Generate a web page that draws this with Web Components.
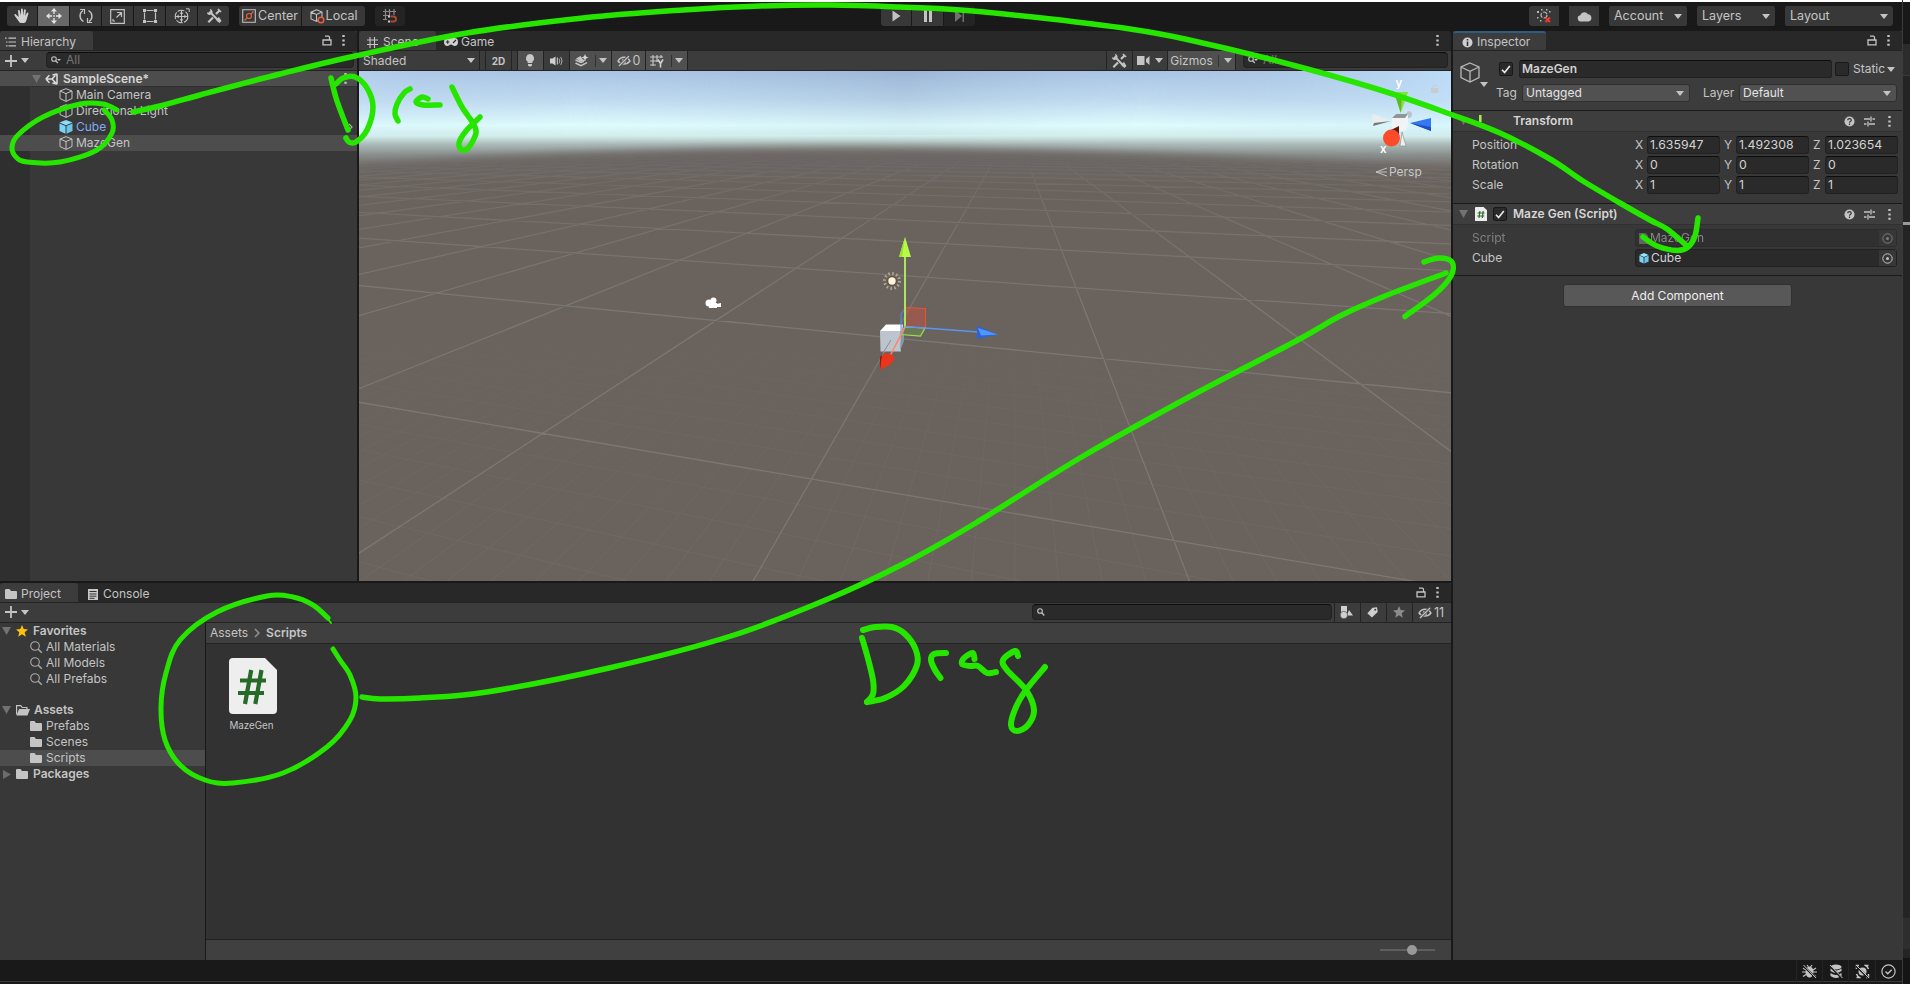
<!DOCTYPE html>
<html lang="en"><head><meta charset="utf-8"><title>Editor</title>
<style>
html,body{margin:0;height:100%;background:#191919;overflow:hidden}
body{font:12px/16px Inter,"Noto Sans",sans-serif;color:#c4c4c4}
</style></head><body>
<editor-app></editor-app>
<script>
const define=(name,css,html,setup)=>{
  const t=document.createElement('template');
  t.innerHTML=`<style>*{box-sizing:border-box}:host{box-sizing:border-box}${css}</style>${html}`;
  customElements.define(name,class extends HTMLElement{
    constructor(){super();this.attachShadow({mode:'open'}).append(t.content.cloneNode(true))}
    connectedCallback(){if(setup&&!this.ready){this.ready=true;setup(this,this.shadowRoot)}}
  });
};

/* ---------- icons: [viewBox w, h, markup] drawn 1:1 in pixels ---------- */
const hashDoc='<path d="M1 0h9l4 4v12a1 1 0 0 1-1 1H1a1 1 0 0 1-1-1V1a1 1 0 0 1 1-1z" transform="scale(.86 .84)" fill="#eee"/><path d="M4.9 4 4 11M8.2 4l-.9 7M2.6 6h7M2.3 9h7" stroke="#2a6b2c" stroke-width="1.2"/>';
const eye='<path d="M1 7c3-5 9-5 12 0-3 4-9 4-12 0z" stroke="currentColor" stroke-width="1.4" fill="none"/><circle cx="7" cy="7" r="2.3" fill="currentColor"/><path d="M2 12 13 1" stroke="#4a4a4a" stroke-width="3"/><path d="M2 12 12 2" stroke="currentColor" stroke-width="1.3"/>';
const icons={
 hand:[16,16,'<path d="M4.6 9 2 6.5c-1-1-2.200.2-1.300 1.200L4.500 13c.8 1.500 1.500 2 3 2h2c1.800 0 2.500-1 3-3l1.900-6.300c.3-1.200-1.200-1.700-1.700-.5L11.300 8l.5-5.600c.1-1.300-1.600-1.400-1.800-.1L9.300 7.400 8.800 1.500c-.1-1.300-1.800-1.300-1.800 0l0 5.900L5.700 2.600c-.4-1.200-2-.8-1.700.4z" fill="#d2d2d2"/>'],
 move:[16,16,'<path d="M8 0l3 3.500H5zM8 16l3-3.500H5zM0 8l3.500-3v6zM16 8l-3.500-3v6z" fill="#e2e2e2"/><path d="M8 3v3M8 10v3M3 8h3M10 8h3" stroke="#e2e2e2" stroke-width="1.300"/><path d="M7 7h2v2H7z" fill="#b0b0b0"/>'],
 rotate:[16,16,'<path d="M5 2.500C1 5 1 11 5.500 13.500M11 13.500c4-2.500 4-8.500-.5-11" fill="none" stroke="#c4c4c4" stroke-width="1.400"/><path d="M2 1.500h4.500V6M14 14.500H9.500V10" fill="none" stroke="#c4c4c4" stroke-width="1.200"/>'],
 scale:[15,15,'<path d="M.7.7h13.600v13.600H.7z" fill="none" stroke="#c4c4c4" stroke-width="1.200"/><path d="M3 10v2h2M6.500 8.500 11 4M7 3.500h4.500V8" fill="none" stroke="#c4c4c4" stroke-width="1.200"/>'],
 rect:[16,16,'<path d="M4.500 2.500h7M4.500 13.500h7M2.500 4.500v7M13.500 4.500v7" stroke="#c4c4c4" stroke-width="1.200"/><path d="M1 1h3v3H1zM12 1h3v3h-3zM1 12h3v3H1zM12 12h3v3h-3z" fill="#c4c4c4"/>'],
 globe:[16,16,'<circle cx="7.500" cy="8.500" r="6.300" fill="none" stroke="#c4c4c4" stroke-width="1.100" stroke-dasharray="7 1.300"/><path d="M7.500 2.500v12M1.500 8.500h12" stroke="#c4c4c4" stroke-width="1.100"/><path d="M7.500 3.500l2 2.200h-4zM7.500 13.500l2-2.200h-4zM2.500 8.500l2.200-2v4zM12.500 8.500l-2.200-2v4z" fill="#c4c4c4"/><path d="M12 .8h3.200V4" fill="none" stroke="#c4c4c4"/>'],
 tools:[16,16,'<path d="M3.500 3.500 12.800 13" stroke="#c4c4c4" stroke-width="2"/><path d="M1 4.500c0 2 2 3 4 2l1.500-1.500C7 3 5.500 1 4 1L4.500 3.500 3.500 4.500zM11 10.500l2-1.500 2.500 4-2 2-3-2.500z" fill="#c4c4c4"/><path d="M13.500 2.500 10 6M7 9.500 2.300 14.200" stroke="#c4c4c4" stroke-width="2.200"/><path d="m12 1 3 3" stroke="#c4c4c4" stroke-width="1.600"/>'],
 pivot:[14,14,'<path d="M.7.7h12.600v12.600H.7z" fill="none" stroke="#c4c4c4" stroke-width="1.100"/><circle cx="7" cy="7" r="2.500" fill="none" stroke="#e8603c" stroke-width="1.200"/><path d="M9 5l2.500-2.500M5 9l-2.500 2.500" stroke="#e8603c" stroke-width="1.100"/>'],
 local:[16,15,'<path d="M6.500.8 12 3v6l-5.500 3.500L1 10V3.200zM1 3.200l5.500 2.300L12 3M6.500 5.500v7" fill="none" stroke="#c4c4c4" stroke-width="1.100"/><circle cx="11" cy="11" r="2.800" fill="#383838" stroke="#e8603c" stroke-width="1.500"/>'],
 snap:[16,16,'<path d="M3.500 1v11M7.500 1v6M12 1v6M1 3.500h13M1 7.500h7M1 11.500h4" stroke="#898989" stroke-width="1.200"/><path d="M8.500 8.500h3a2.400 2.400 0 0 1 0 5h-3" fill="none" stroke="#a44c30" stroke-width="2"/><path d="M6 7.500h2v2H6zM6 12.500h2v2H6z" fill="#ccc"/>'],
 play:[9,12,'<path d="M.5.5 8.500 6 .5 11.500z" fill="#c4c4c4"/>'],
 pause:[9,12,'<path d="M0 0h3v12H0zM5 0h3v12H5z" fill="#c4c4c4"/>'],
 step:[11,12,'<path d="M1 0l7 6-7 6zM8.500 0h1.500v12H8.500z" fill="#707070"/>'],
 nodes:[16,16,'<circle cx="8" cy="7" r="3" fill="none" stroke="#b8b8b8" stroke-width="1.200" stroke-dasharray="5 1.300"/><path d="M1 3h2v2H1zM5 1h1.500v1.500H5zM10 1h1.500v1.500H10zM13 3h1.500v1.500H13zM1 9h1.500v1.500H1zM4 12h1.500v1.500H4z" fill="#b8b8b8"/><path d="m9.500 9.500 4.500 4.500M14 9.500 9.500 14" stroke="#f0392c" stroke-width="2"/>'],
 cloud:[15,11,'<path d="M3.500 10.500a3.200 3.200 0 0 1-.3-6.300A4.400 4.400 0 0 1 11 3.200a3.700 3.700 0 0 1 .5 7.300z" fill="#c4c4c4"/>'],
 caret:[8,5,'<path d="M0 0h8L4 5z" fill="currentColor"/>'],
 lock:[10,11,'<path d="M1 5h8v4.800H1z" fill="none" stroke="#c4c4c4" stroke-width="1.300"/><path d="M3 1.200h3.200Q7.500 1.200 7.500 2.500V5" fill="none" stroke="#c4c4c4" stroke-width="1.300"/>'],
 dots:[3,11,'<path d="M.3 0h2.400v2H.3zM.3 4.400h2.400v2H.3zM.3 8.800h2.400v2H.3z" fill="#c4c4c4"/>'],
 list:[12,10,'<path d="M3.500 1.200H11M3.500 5H11M3.500 8.800H11" stroke="#c4c4c4" stroke-width="1.200"/><path d="M0 .6h1.500v1.200H0zM1 4.400h1.500v1.200H1zM1 8.200h1.500v1.200H1z" fill="#c4c4c4"/>'],
 plus:[12,12,'<path d="M6 0v12M0 6h12" stroke="#c4c4c4" stroke-width="1.800"/>'],
 search:[9,8,'<circle cx="3" cy="3" r="2.300" fill="none" stroke="#c4c4c4" stroke-width="1.100"/><path d="m4.800 4.800 2.500 2.700" stroke="#c4c4c4" stroke-width="1.300"/>'],
 searchCaret:[10,8,'<circle cx="3" cy="3" r="2.300" fill="none" stroke="#c4c4c4" stroke-width="1.100"/><path d="m4.800 4.800 2 2.200" stroke="#c4c4c4" stroke-width="1.200"/><path d="M6 3h4L8 5z" fill="#c4c4c4"/>'],
 find:[13,13,'<circle cx="5" cy="5" r="4.300" fill="none" stroke="#aaa" stroke-width="1.100"/><path d="m8.300 8.300 3.500 3.500" stroke="#aaa" stroke-width="1.500"/>'],
 unity:[13,12,'<path d="M12 .8v10.400M12 1 7.500 2M12 11 7.500 10M.8 6l3.600-3.700M.8 6l3.600 3.700M1 6h6M7 6l3.800-4M7 6l3.800 4" fill="none" stroke="#ddd" stroke-width="1.500"/>'],
 cube:[14,14,'<path d="M7 .7 13 3v7.500L7 13.400 1 10.500V3zM1 3l6 2.600L13 3M7 5.600v7.800" fill="none" stroke="#c4c4c4" stroke-width="1"/>'],
 cubeBig:[20,21,'<path d="M10 1 19 5v10.500l-9 4.500-9-4.500V5zM1 5l9 4.300L19 5M10 9.300V20" fill="none" stroke="#b8b8b8" stroke-width="1.300"/>'],
 prefab:[14,14,'<path d="M7 0l6.500 2.600L7 5.300.5 2.600z" fill="#8cddfb"/><path d="M.5 3.500 6.500 6v7.800L.5 11z" fill="#7bd3f7"/><path d="M13.500 3.500 7.500 6v7.800L13.500 11z" fill="#6cc4ea"/>'],
 prefabS:[10,11,'<path d="M5 0l4.600 1.900L5 3.900.4 1.900z" fill="#9be2fb"/><path d="M.4 2.600 4.600 4.500v6L.4 8.500z" fill="#7bd3f7"/><path d="M9.600 2.600 5.400 4.500v6l4.200-2z" fill="#6cc4ea"/>'],
 hash:[11,11,'<path d="M3 0v11M7.500 0v11M0 3h11M0 7.500h11" stroke="#c4c4c4" stroke-width="1.100"/>'],
 pad:[14,8,'<path d="M3.500 0h7a3.500 4 0 0 1 0 8C9 8 8.500 6.500 7 6.500S5 8 3.500 8a3.500 4 0 0 1 0-8z" fill="#d0d0d0"/><path d="M2 4h3.400M3.700 2.300v3.400M9 5l3-3" stroke="#282828" stroke-width="1.100"/>'],
 bulb:[10,13,'<path d="M5 0a4.300 4.300 0 0 1 2.500 7.600L7.300 9H2.700l-.2-1.400A4.300 4.300 0 0 1 5 0zM3 10h4v1.500L5.800 12.500H4.200L3 11.500z" fill="#c8c8c8"/>'],
 audio:[13,10,'<path d="M0 2.500h2.500L5.500.5v9l-3-2H0zM6.800 1.500h1v7h-1z" fill="#d0d0d0"/><path d="M9 2.500q1.500 2.500 0 5M10.800 1q2.400 4 0 8" fill="none" stroke="#aaa"/>'],
 fx:[14,13,'<path d="M.5 6 6 8.500l3-1.200M.5 9 6 11.700l6-3" fill="none" stroke="#c4c4c4" stroke-width="1.400"/><path d="M1 4.500 5.500 2 8 5.500l3 .8L6 8z" fill="#c4c4c4"/><path d="M10 0l1 2.500L13.500 3.500 11 4.500 10 7 9 4.500 6.500 3.500 9 2.500z" fill="#d8d8d8"/>'],
 eye:[14,13,eye],
 gridy:[15,14,'<path d="M3 1v11M7 1v7M11 1v3M0 3h13M0 7h8M0 11h6" stroke="#c4c4c4" stroke-width="1.200"/><path d="M8 5.500l2.500 4 2.500-4M10.500 9v4.500" fill="none" stroke="#d8d8d8" stroke-width="1.500"/>'],
 cam:[13,9,'<path d="M0 0h7.500v9H0zM9 3l3.500-3v9L9 6z" fill="#c4c4c4"/>'],
 info:[11,11,'<circle cx="5.500" cy="5.500" r="5" fill="#d0d0d0"/><path d="M4.700 2h1.600v1.600H4.700zM4.700 4.500h1.600V9H4.700z" fill="#333"/>'],
 help:[11,11,'<circle cx="5.500" cy="5.500" r="5" fill="#c4c4c4"/><path d="M3.700 4.300q0-1.700 1.800-1.700t1.800 1.600c0 1-1.800 1-1.800 2.500M5.500 7.600v1.300" fill="none" stroke="#333" stroke-width="1.200"/>'],
 preset:[11,11,'<path d="M0 3h6M8.500 3H11M0 8h2.500M5 8h6M7 .5v5M4 5.500v5" stroke="#c4c4c4" stroke-width="1.300"/>'],
 check:[10,9,'<path d="M1 4.800 3.600 7.600 8.800 1" fill="none" stroke="#ececec" stroke-width="1.600"/>'],
 script:[12,14,hashDoc],
 scriptDim:[9,11,'<path d="M0 0h6.500L9 2.500V11H0z" fill="#8c8c8c"/>'],
 target:[11,11,'<circle cx="5.500" cy="5.500" r="4.700" fill="none" stroke="#c4c4c4"/><circle cx="5.500" cy="5.500" r="1.500" fill="#c4c4c4"/>'],
 folder:[12,10,'<path d="M0 1Q0 0 1 0h3.500L6 2h5q1 0 1 1v6q0 1-1 1H1Q0 10 0 9z" fill="#c4c4c4"/>'],
 folderOpen:[14,11,'<path d="M.6 9.500V.7h4.200L6.200 2.500h4.700v2" fill="none" stroke="#c4c4c4" stroke-width="1.200"/><path d="M3 4h11l-2.500 6.500H.5z" fill="#c4c4c4"/>'],
 star:[12,12,'<path d="M6 0l1.700 4.100 4.300.3-3.300 2.800 1.100 4.500L6 9.300l-3.800 2.400 1.100-4.500L0 4.400l4.300-.3z" fill="#fcc00f"/>'],
 starDim:[12,12,'<path d="M6 0l1.700 4.100 4.300.3-3.300 2.800 1.100 4.500L6 9.300l-3.800 2.400 1.100-4.500L0 4.400l4.300-.3z" fill="#8c8c8c"/>'],
 console:[10,11,'<path d="M0 0h10v11H0z" fill="#c8c8c8"/><path d="M1.500 2.500h7M1.500 5h7M1.500 7.200h7M1.500 9.300h5" stroke="#333"/>'],
 shapes:[13,13,'<path d="M1 0h6v6H1zM9 4l4 5.500H7z" fill="#d0d0d0"/><circle cx="3.900" cy="9" r="3.700" fill="#d0d0d0" stroke="#3c3c3c" stroke-width=".6"/>'],
 tag:[11,11,'<path d="M5.500.8 10 .3l.7 4.600L4.900 10.600.4 6.300z" fill="#d0d0d0"/><circle cx="8.200" cy="2.800" r="1" fill="#3c3c3c"/>'],
 crumb:[6,10,'<path d="m1 1 3.800 4L1 9" fill="none" stroke="#8c8c8c" stroke-width="1.700"/>'],
 bug:[15,15,'<ellipse cx="7.500" cy="8" rx="4" ry="5.500" fill="#c4c4c4"/><path d="M1 4l3 2M0 8h4M1 12.500l3-2M14 4l-3 2M15 8h-4M14 12.500l-3-2M5 1l1.500 2M10 1 8.500 3" stroke="#c4c4c4" stroke-width="1.200"/><path d="m1 1.500 13 12.500" stroke="#191919" stroke-width="2"/><path d="m1.500 1 12.500 13" stroke="#c4c4c4"/>'],
 stack:[14,15,'<ellipse cx="7" cy="3" rx="5.500" ry="2.500" fill="#c4c4c4"/><path d="M1.500 4.500q5.500 4 11 0v2.500q-5.500 4-11 0zM1.500 9q5.500 4 11 0v3q-5.500 4-11 0z" fill="#c4c4c4"/><path d="m1 2 12 12.500" stroke="#191919" stroke-width="2"/><path d="m1 1 12.500 13" stroke="#c4c4c4"/>'],
 refresh:[15,15,'<path d="M4 1.500H1.500V5M11 13.500h2.500V10M1.500 10q1 3 4 4M13.500 5q-1-3-4-4M10.500 1.500h3M1.500 13.500h3" fill="none" stroke="#c4c4c4" stroke-width="1.500"/><circle cx="7.500" cy="7.500" r="4" fill="#c4c4c4"/><path d="m1 2 13 12.500" stroke="#191919" stroke-width="2"/><path d="m1 1 13 13" stroke="#c4c4c4"/>'],
 ok:[15,15,'<circle cx="7.500" cy="7.500" r="6.600" fill="none" stroke="#c4c4c4" stroke-width="1.200"/><path d="m4.500 7.500 2.200 2.200 4-4" fill="none" stroke="#c4c4c4" stroke-width="1.400"/>'],
 fold:[9,8,'<path d="M0 0h9L4.500 8z" fill="#727272"/>'],
 foldR:[8,9,'<path d="M0 0v9l8-4.500z" fill="#6c6c6c"/>'],
 chevron:[5,8,'<path d="M1 1l3 3-3 3" fill="none" stroke="#aaa" stroke-width="1.200"/>'],
 axes:[13,13,'<path d="M5 0h2.600v7H5z" fill="#a4e84c"/><path d="M6.500 8.500l5 .5-1 3-3-1z" fill="#f0502c"/>']
};
define('ui-icon',':host{display:inline-flex;flex:none}svg{display:block}','',(el,r)=>{
  const [w,h,m]=icons[el.getAttribute('name')];
  r.append(document.createRange().createContextualFragment(`<svg width="${w}" height="${h}" viewBox="0 0 ${w} ${h}" fill="none">${m}</svg>`));
});

define('tool-btn',`:host{display:flex;align-items:center;justify-content:center;height:20px;background:#383838;flex:none;gap:2px;font-size:12.500px}
:host([on]){background:#696969}:host([dim]){background:#242424}:host([drop]){justify-content:space-between;padding:0 5px;border-radius:2px}`,'<slot></slot>');
define('main-toolbar',`:host{display:flex;height:31px;background:#191919;border-top:2px solid #fff;padding:4px 9px 0 7px;width:1902px;align-items:flex-start}
.g{display:flex;gap:1px;border-radius:3px;overflow:hidden;flex:none}.sp{flex:1}`,
`<div class="g"><tool-btn style="width:30px"><ui-icon name="hand"></ui-icon></tool-btn><tool-btn on style="width:31px"><ui-icon name="move"></ui-icon></tool-btn><tool-btn style="width:31px"><ui-icon name="rotate"></ui-icon></tool-btn><tool-btn style="width:31px"><ui-icon name="scale"></ui-icon></tool-btn><tool-btn style="width:31px"><ui-icon name="rect"></ui-icon></tool-btn><tool-btn style="width:31px"><ui-icon name="globe"></ui-icon></tool-btn><tool-btn style="width:31px"><ui-icon name="tools"></ui-icon></tool-btn></div>
<div class="g" style="margin-left:10px"><tool-btn style="width:62px"><ui-icon name="pivot"></ui-icon>Center</tool-btn><tool-btn style="width:63px;gap:0"><ui-icon name="local"></ui-icon>Local</tool-btn></div>
<div class="g" style="margin-left:10px"><tool-btn dim style="width:30px"><ui-icon name="snap"></ui-icon></tool-btn></div>
<div class="g" style="margin-left:476px"><tool-btn style="width:30px"><ui-icon name="play"></ui-icon></tool-btn><tool-btn style="width:31px;padding-left:1px"><ui-icon name="pause"></ui-icon></tool-btn><tool-btn dim style="width:31px"><ui-icon name="step"></ui-icon></tool-btn></div>
<div class="sp"></div>
<div class="g" style="gap:10px"><tool-btn style="width:30px"><ui-icon name="nodes"></ui-icon></tool-btn><tool-btn style="width:30px"><ui-icon name="cloud"></ui-icon></tool-btn><tool-btn drop style="width:78px">Account<ui-icon name="caret"></ui-icon></tool-btn><tool-btn drop style="width:78px">Layers<ui-icon name="caret"></ui-icon></tool-btn><tool-btn drop style="width:108px">Layout<ui-icon name="caret"></ui-icon></tool-btn></div>`);

define('panel-header',`:host{display:flex;height:19px;background:#282828;align-items:center;padding-right:12px;gap:10px;flex:none;border-radius:0 3px 0 0}.sp{flex:1}`,
`<slot></slot><div class="sp"></div><slot name="tools"></slot>`);
define('panel-tab',`:host{display:flex;height:19px;align-items:center;padding:3px 0 0 5px;gap:5px;flex:none;margin-right:-10px}:host([on]){background:#3c3c3c;border-radius:3px 3px 0 0}:host([focus]){border-top:2px solid #2c5d87;padding-top:1px}`,'<slot></slot>');
define('panel-bar',`:host{display:flex;height:21px;background:#3c3c3c;border-top:1px solid #232323;border-bottom:1px solid #232323;align-items:stretch;flex:none}`,'<slot></slot>');
define('bar-cell',`:host{display:flex;align-items:center;justify-content:center;gap:3px;flex:none;border-right:1px solid #232323}:host([on]){background:#505050}`,'<slot></slot>');
define('search-box',`:host{display:flex;align-items:center;gap:5px;height:16px;margin-top:1px;border-radius:4px;background:#2a2a2a;border:1px solid #212121;border-top-color:#0d0d0d;padding-left:4px;color:#757575;flex:none}`,'<slot></slot>');

define('tree-row',`:host{display:flex;align-items:center;height:16px;flex:none;padding-left:var(--in,0);gap:4px;white-space:nowrap}
:host([sel]){background:#4d4d4d}:host([bold]){font-weight:600}`,'<slot></slot>');

define('hierarchy-panel',`:host{display:flex;flex-direction:column;width:357px;height:550px;background:#383838}
.list{flex:1;background:linear-gradient(90deg,#2f2f2f 30px,#383838 30px)}.list tree-row{gap:3px}`,
`<panel-header><panel-tab on style="width:93px;gap:4px"><ui-icon name="list"></ui-icon>Hierarchy</panel-tab><ui-icon slot="tools" name="lock"></ui-icon><ui-icon slot="tools" name="dots"></ui-icon></panel-header>
<panel-bar><div style="display:flex;align-items:center;padding-left:5px;gap:4px;width:46px"><ui-icon name="plus"></ui-icon><ui-icon name="caret"></ui-icon></div><search-box style="width:308px"><ui-icon name="searchCaret"></ui-icon>All</search-box></panel-bar>
<div class="list"><tree-row sel bold style="height:15px;--in:32px;gap:0;color:#d6d6d6;padding-right:10px"><ui-icon name="fold"></ui-icon><ui-icon name="unity" style="margin:0 5px 0 4px"></ui-icon>SampleScene*<span style="flex:1"></span><ui-icon name="dots"></ui-icon></tree-row>
<div style="height:1px;background:#303030"></div>
<tree-row style="--in:59px"><ui-icon name="cube"></ui-icon>Main Camera</tree-row><tree-row style="--in:59px"><ui-icon name="cube"></ui-icon>Directional Light</tree-row>
<tree-row style="--in:59px;color:#7fabf0;padding-right:4px"><ui-icon name="prefab"></ui-icon>Cube<span style="flex:1"></span><ui-icon name="chevron"></ui-icon></tree-row>
<tree-row sel style="--in:59px"><ui-icon name="cube"></ui-icon>MazeGen</tree-row></div>`);

/* ---------- 3D viewport: perspective ground grid ---------- */
const marks=[[0,0,542.9,433],[1,0,810.9,479],[0,1,716.2,320.7],[-1,1,565.4,305.7],[-2,1,436.7,293.3],[0,2,795.5,268],[-1,2,679.7,260.3],[2,0,1173.4,540.3],[2,1,1103,358.3],[2,2,1076.2,287.6],[2,3,1061.2,249.1],[3,1,1360.1,383.8],[3,2,1247.6,299.8],[3,3,1188.7,257.3],[1,2,928,278.4]];
function fitPlane(){
  const A=Array.from({length:8},()=>Array(9).fill(0));
  for(const [u,v,px,py] of marks){const x=px/1000,y=py/1000;
    for(const row of [[u,v,1,0,0,0,-u*x,-v*x,x],[0,0,0,u,v,1,-u*y,-v*y,y]])
      for(let i=0;i<8;i++)for(let j=0;j<9;j++)A[i][j]+=row[i]*row[j];}
  for(let i=0;i<8;i++){let p=i;for(let k=i;k<8;k++)if(Math.abs(A[k][i])>Math.abs(A[p][i]))p=k;[A[i],A[p]]=[A[p],A[i]];
    for(let k=0;k<8;k++)if(k!==i){const f=A[k][i]/A[i][i];for(let j=i;j<9;j++)A[k][j]-=f*A[i][j];}}
  return A.map((r,i)=>r[8]/r[i]);
}
const H=fitPlane();
function seg(u0,v0,u1,v1){
  const W=(u,v)=>H[6]*u+H[7]*v+1,e=.03;let a=W(u0,v0),b=W(u1,v1);
  if(a<e&&b<e)return'';
  if(a<e){const t=(e-a)/(b-a);u0+=(u1-u0)*t;v0+=(v1-v0)*t}
  else if(b<e){const t=(e-a)/(b-a);u1=u0+(u1-u0)*t;v1=v0+(v1-v0)*t}
  const P=(u,v)=>{const w=W(u,v);return ((H[0]*u+H[1]*v+H[2])/w*1000).toFixed(1)+' '+((H[3]*u+H[4]*v+H[5])/w*1000).toFixed(1)};
  return `M${P(u0,v0)}L${P(u1,v1)}`;
}
let major='',minor='';
for(let i=-40;i<=40;i++){major+=seg(i,-6,i,60)+seg(-60,i,60,i)}
for(let i=-60;i<=80;i++)if(i%10){minor+=seg(i/10,-4,i/10,5)+seg(-8,i/10,9,i/10)}
define('scene-view',':host{display:block;height:510px;width:1092px;background:#69625d;overflow:hidden}svg{display:block}',`
<svg width="1092" height="510" viewBox="359 71 1092 510" font-family="Inter,sans-serif">
<defs>
<linearGradient id="sky" gradientUnits="userSpaceOnUse" x1="0" y1="71" x2="0" y2="168"><stop offset="0" stop-color="#a9c5e5"/><stop offset=".3" stop-color="#c1dbf0"/><stop offset=".56" stop-color="#dffcfd"/><stop offset=".67" stop-color="#d2edec"/><stop offset=".76" stop-color="#a9b8b6"/><stop offset=".86" stop-color="#8c9391"/><stop offset="1" stop-color="#716b67"/></linearGradient>
<linearGradient id="tint"><stop offset="0" stop-color="#c0dcf8" stop-opacity=".35"/><stop offset=".2" stop-color="#a8c0d8" stop-opacity="0"/><stop offset=".5" stop-color="#7890b0" stop-opacity=".28"/><stop offset=".72" stop-color="#a8c0d8" stop-opacity="0"/><stop offset="1" stop-color="#c4e4ff" stop-opacity=".75"/></linearGradient>
<linearGradient id="fall" gradientUnits="userSpaceOnUse" x1="0" y1="71" x2="0" y2="135"><stop offset="0" stop-color="#fff"/><stop offset="1" stop-color="#333"/></linearGradient>
<mask id="top"><path d="M359 71h1092v64H359z" fill="url(#fall)"/></mask>
<linearGradient id="far" gradientUnits="userSpaceOnUse" x1="0" y1="150" x2="0" y2="581"><stop offset="0" stop-color="#000"/><stop offset=".06" stop-color="#666"/><stop offset=".2" stop-color="#bbb"/><stop offset=".4" stop-color="#fff"/></linearGradient>
<linearGradient id="near" gradientUnits="userSpaceOnUse" x1="0" y1="290" x2="0" y2="581"><stop offset="0" stop-color="#000"/><stop offset=".5" stop-color="#999"/><stop offset="1" stop-color="#fff"/></linearGradient>
<linearGradient id="dirt" gradientUnits="userSpaceOnUse" x1="0" y1="150" x2="0" y2="230"><stop offset="0" stop-color="#6c6663"/><stop offset="1" stop-color="#69625d"/></linearGradient>
<mask id="mf" maskUnits="userSpaceOnUse" x="359" y="71" width="1092" height="510"><path d="M359 150h1092v431H359z" fill="url(#far)"/></mask>
<mask id="mn" maskUnits="userSpaceOnUse" x="359" y="71" width="1092" height="510"><path d="M359 290h1092v291H359z" fill="url(#near)"/></mask>
<filter id="soft" x="-5%" y="-5%" width="110%" height="110%"><feGaussianBlur stdDeviation="4"/></filter>
</defs>
<path d="M359 71h1092v100H359z" fill="url(#sky)"/><path d="M359 71h1092v64H359z" fill="url(#tint)" mask="url(#top)"/>
<path d="M300 169Q630 145 905 148T1510 172V620H300z" fill="url(#dirt)" filter="url(#soft)"/>
<path d="M359 180h1092v401H359z" fill="#69625d"/>
<path d="${minor}" stroke="#77736e" stroke-width=".9" opacity=".5" mask="url(#mn)"/>
<path d="${major}" stroke="#7b7874" stroke-width="1.300" mask="url(#mf)"/>
<g><circle cx="709" cy="303" r="3.500" fill="#fff"/><circle cx="713.500" cy="300.500" r="3" fill="#fff"/><path d="M708 303h9v5h-8zM716 304l5-1v4h-5z" fill="#fff"/></g>
<circle cx="892" cy="281" r="7.500" fill="none" stroke="#b5a98f" stroke-width="3" stroke-dasharray="1.500 2.430"/><circle cx="892" cy="281" r="5" fill="#5a544c"/><circle cx="892" cy="281" r="3.700" fill="#fff3d6"/>
<path d="M880 331l6-6.500h17l-1 8z" fill="#fff"/><path d="M880 331h21v20.500h-20.500z" fill="#bcc5ce"/><path d="M901 332l3-5v14l-4 10.500z" fill="#8795a6"/>
<path d="M891 340l-8 13" stroke="#8a8f94"/>
<path d="M906 307.500l19.500 1v20L905 326z" fill="#d0523c" fill-opacity=".45" stroke="#dd5638" stroke-width="1.200"/>
<path d="M905 308l-4 6v20l4-7z" fill="#4a78d8" fill-opacity=".15" stroke="#5a8ae8"/>
<path d="M905 327l20 1-4.500 8L901 334.500z" fill="#6b9050" fill-opacity=".5" stroke="#9be050" stroke-width="1.200"/>
<path d="M905 327V256" stroke="#a8e85c" stroke-width="2"/><path d="M905 237l6 20h-12z" fill="#b6fb48"/><path d="M905 237l-6 20h3z" fill="#9be030"/>
<path d="M905 326.500l73 5.500" stroke="#5c94f4" stroke-width="1.600"/><path d="M977 326l21 8.500-21 4.500z" fill="#2d63d8"/><path d="M978 328l20 6.500-17 1z" fill="#4f97ff"/>
<path d="M905 327l-15 29" stroke="#ff8668" stroke-width="1.600"/><path d="M880 370l0-12 5-5 8 2 1 5-3 4z" fill="#e8351b"/><path d="M880 370v-13l2-2z" fill="#8e1b0c"/>
<path d="M1408 111a4 3.500 0 0 1 0 7l-3-3z" fill="#b8c4c8"/><path d="M1392 117l4-3h12v12l-3 5-13-1z" fill="#f0f4f6"/><path d="M1392 118l4-4h12l-3 4z" fill="#8e9699"/>
<path d="M1394 92h14l-7.200 21z" fill="#84e23a"/><path d="M1394 92l6.800 21 1-16z" fill="#60b826"/>
<path d="M1373 114q-2 6 0 12l18-5z" fill="#e8eeee"/><path d="M1373 126l18-5-17 2z" fill="#777"/>
<path d="M1431 118v13l-21-8z" fill="#3578f4"/><path d="M1431 131l-21-8 21 4z" fill="#2050c0"/>
<path d="M1402 132l4 14h-6z" fill="#eee" stroke="#888" stroke-width=".6"/><path d="M1391 130l8-4v11z" fill="#611a12"/><circle cx="1391.500" cy="138" r="8.500" fill="#fb4b2b"/>
<text x="1395.500" y="87" font-size="11.500" font-weight="600" fill="#fff">y</text><text x="1380" y="153" font-size="11.500" font-weight="600" fill="#fff">x</text>
<path d="M1431 88h7.500v5H1431z" fill="#c8ccd0"/><path d="M1433 88v-2q2-2.500 4 0" fill="none" stroke="#c8ccd0"/>
<path d="M1387 168l-11 4 11 4M1376 172h11" stroke="#c4c4c4" fill="none"/>
<text x="1389" y="176" font-size="12" fill="#c8c8c8">Persp</text>
</svg>`);

define('scene-panel',`:host{display:flex;flex-direction:column;width:1092px;height:550px}.v{width:1px;height:12px;background:#333}`,
`<panel-header><panel-tab on style="width:77px;padding-left:8px"><ui-icon name="hash"></ui-icon>Scene</panel-tab><panel-tab style="margin-left:13px;padding-left:5px;gap:3px"><ui-icon name="pad" style="margin-left:-10px"></ui-icon>Game</panel-tab><ui-icon slot="tools" name="dots"></ui-icon></panel-header>
<panel-bar><bar-cell style="width:121px;justify-content:space-between;padding:0 4px;">Shaded<ui-icon name="caret"></ui-icon></bar-cell><bar-cell style="width:6px"></bar-cell><bar-cell style="width:26px;font-weight:700;font-size:10px">2D</bar-cell><bar-cell style="width:6px"></bar-cell>
<bar-cell on style="width:26px;padding-right:1px"><ui-icon name="bulb"></ui-icon></bar-cell><bar-cell style="width:26px"><ui-icon name="audio"></ui-icon></bar-cell><bar-cell on style="width:42px;gap:6px"><ui-icon name="fx"></ui-icon><span class="v"></span><ui-icon name="caret" style="margin-left:-3px"></ui-icon></bar-cell><bar-cell on style="width:34px;font-size:12.500px;gap:2px"><ui-icon name="eye"></ui-icon>0</bar-cell><bar-cell on style="width:42px;gap:6px"><ui-icon name="gridy"></ui-icon><span class="v"></span><ui-icon name="caret" style="margin-left:-3px"></ui-icon></bar-cell>
<bar-cell style="flex:1"></bar-cell><bar-cell style="width:26px;padding-right:2px"><ui-icon name="tools"></ui-icon></bar-cell><bar-cell style="width:35px;gap:5px"><ui-icon name="cam"></ui-icon><ui-icon name="caret"></ui-icon></bar-cell><bar-cell on style="width:68px;gap:5px;padding-right:1px">Gizmos<span class="v"></span><ui-icon name="caret"></ui-icon></bar-cell><search-box style="width:205px;margin:1px 3px 0 7px"><ui-icon name="searchCaret"></ui-icon>All</search-box></panel-bar>
<scene-view></scene-view>`);

define('project-panel',`:host{display:flex;flex-direction:column;width:1451px;height:377px;background:#383838}
.body{display:flex;flex:1;min-height:0}.tree{width:206px;border-right:1px solid #191919;flex:none}.main{flex:1;display:flex;flex-direction:column;background:#323232}
.crumbs{height:21px;background:#3f3f3f;border-bottom:1px solid #232323;display:flex;align-items:center;gap:6px;padding-left:4px}.files{flex:1;padding:14px 0 0 23px}
.file{width:48px;font-size:9.800px;line-height:14px;display:flex;flex-direction:column;align-items:center;gap:5px}.file span{margin-left:-3px}.foot{height:21px;background:#404040;border-top:1px solid #232323;display:flex;justify-content:flex-end;align-items:center;padding-right:16px}
.track{width:55px;height:2px;background:#5e5e5e;display:flex;align-items:center;padding-left:27px}.knob{width:10px;height:10px;border-radius:5px;background:#999}`,
`<panel-header><panel-tab on style="width:78px;gap:4px"><ui-icon name="folder"></ui-icon>Project</panel-tab><panel-tab style="margin-left:5px"><ui-icon name="console"></ui-icon>Console</panel-tab><ui-icon slot="tools" name="lock"></ui-icon><ui-icon slot="tools" name="dots"></ui-icon></panel-header>
<panel-bar><div style="display:flex;align-items:center;padding:0 0 1px 5px;gap:4px;flex:1"><ui-icon name="plus"></ui-icon><ui-icon name="caret"></ui-icon></div><search-box style="width:300px;margin-right:2px"><ui-icon name="search"></ui-icon></search-box><div style="width:1px;background:#232323"></div><bar-cell style="width:26px;padding:0 2px 1px 0"><ui-icon name="shapes"></ui-icon></bar-cell><bar-cell style="width:26px;padding:0 2px 1px 0"><ui-icon name="tag"></ui-icon></bar-cell><bar-cell style="width:26px;padding:0 2px 1px 0"><ui-icon name="starDim"></ui-icon></bar-cell><bar-cell style="width:38px;border:0;gap:2px;padding-right:2px;font-size:12.500px"><ui-icon name="eye"></ui-icon>11</bar-cell></panel-bar>
<div class="body"><div class="tree">
<tree-row bold style="--in:2px;gap:5px"><ui-icon name="fold"></ui-icon><ui-icon name="star"></ui-icon>Favorites</tree-row>
<tree-row style="--in:30px;gap:3px"><ui-icon name="find"></ui-icon>All Materials</tree-row><tree-row style="--in:30px;gap:3px"><ui-icon name="find"></ui-icon>All Models</tree-row><tree-row style="--in:30px;gap:3px"><ui-icon name="find"></ui-icon>All Prefabs</tree-row>
<tree-row bold style="--in:2px;gap:4px;margin-top:15px"><ui-icon name="fold"></ui-icon><ui-icon name="folderOpen" style="margin-left:1px"></ui-icon>Assets</tree-row>
<tree-row style="--in:30px"><ui-icon name="folder"></ui-icon>Prefabs</tree-row><tree-row style="--in:30px"><ui-icon name="folder"></ui-icon>Scenes</tree-row><tree-row sel style="--in:30px"><ui-icon name="folder"></ui-icon>Scripts</tree-row>
<tree-row bold style="--in:3px;gap:5px"><ui-icon name="foldR"></ui-icon><ui-icon name="folder"></ui-icon>Packages</tree-row></div>
<div class="main"><div class="crumbs"><span>Assets</span><ui-icon name="crumb"></ui-icon><b style="font-weight:600">Scripts</b></div>
<div class="files"><div class="file"><svg width="48" height="56" viewBox="0 0 48 56"><path d="M4 0h32l12 12v40q0 4-4 4H4q-4 0-4-4V4q0-4 4-4z" fill="#eee"/><path d="M22.200 12 16 46M32.500 12 26.300 46M11 22.500h26M9 35h26" stroke="#256a27" stroke-width="4.200" fill="none"/></svg><span>MazeGen</span></div></div>
<div class="foot"><div class="track"><div class="knob"></div></div></div></div></div>`);

define('check-box',`:host{display:flex;align-items:center;justify-content:center;width:14px;height:14px;background:#2a2a2a;border:1px solid #191919;border-radius:2px;flex:none}`,'<slot></slot>');
define('text-field',`:host{display:flex;align-items:center;height:18px;background:#2a2a2a;border:1px solid #212121;border-top-color:#0d0d0d;border-radius:3px;padding-left:2px;color:#d2d2d2;flex:none;font-size:12.300px}`,'<slot></slot>');
define('drop-field',`:host{display:flex;align-items:center;justify-content:space-between;height:18px;background:#515151;border:1px solid #303030;border-radius:3px;padding:0 5px 0 3px;color:#e4e4e4;flex:none}`,'<slot></slot><ui-icon name="caret" style="color:#c4c4c4"></ui-icon>');
define('vector-row',`:host{display:flex;align-items:center;height:18px;padding-left:19px;margin-bottom:2px}.l{width:163px}.a{width:12px;flex:none}text-field{width:73px;margin-right:4px}`,
'<span class="l"></span><span class="a">X</span><text-field></text-field><span class="a">Y</span><text-field></text-field><span class="a">Z</span><text-field style="margin:0"></text-field>',
(el,r)=>{r.querySelector('.l').textContent=el.getAttribute('label');const v=el.getAttribute('values').split(' ');r.querySelectorAll('text-field').forEach((f,i)=>f.textContent=v[i])});
define('component-header',`:host{display:flex;align-items:center;height:22px;background:#3e3e3e;border-top:1px solid #1a1a1a;border-bottom:1px solid #303030;padding:0 11px 0 6px;font-weight:600;color:#d6d6d6;flex:none}.sp{flex:1}.t{display:flex;align-items:center;gap:9px}.lead{display:flex;width:54px;align-items:center;gap:6px}`,
'<div class="lead"><slot name="lead"></slot></div><slot></slot><div class="sp"></div><div class="t"><ui-icon name="help"></ui-icon><ui-icon name="preset"></ui-icon><ui-icon name="dots" style="margin-left:4px"></ui-icon></div>');
define('object-row',`:host{display:flex;align-items:center;height:18px;padding-left:19px;margin-bottom:2px}:host([dim]){opacity:.5}.l{width:163px}.f{display:flex;align-items:center;gap:2px;width:262px;height:18px;border:1px solid #212121;border-radius:3px;background:#2a2a2a;padding-left:3px;color:#d2d2d2}.b{margin-left:auto;width:17px;height:16px;background:#373737;display:flex;align-items:center;justify-content:center}`,
'<span class="l"></span><div class="f"><slot></slot><div class="b"><ui-icon name="target"></ui-icon></div></div>',(el,r)=>r.querySelector('.l').textContent=el.getAttribute('label'));

define('inspector-panel',`:host{display:flex;flex-direction:column;width:449px;height:929px;background:#383838}
.top{background:#3c3c3c;border-top:1px solid #232323;height:60px;display:flex;padding:9px 5px 0 7px;flex:none}.big{width:32px;padding-top:2px;position:relative}.big ui-icon+ui-icon{position:absolute;left:20px;top:22px}
.rows{flex:1}.r{display:flex;align-items:center;height:18px;margin-bottom:6px}.props{padding-top:4px;height:71px;flex:none}
.add{width:229px;height:23px;background:#585858;border:1px solid #303030;border-radius:3px;color:#eee;display:flex;align-items:center;justify-content:center;margin:8px 0 0 110px;font-size:12px}`,
`<panel-header><panel-tab on focus style="width:93px;padding-left:9px;gap:4px"><ui-icon name="info"></ui-icon>Inspector</panel-tab><ui-icon slot="tools" name="lock"></ui-icon><ui-icon slot="tools" name="dots"></ui-icon></panel-header>
<div class="top"><div class="big"><ui-icon name="cubeBig"></ui-icon><ui-icon name="caret"></ui-icon></div><div class="rows">
<div class="r" style="padding-left:7px"><check-box><ui-icon name="check"></ui-icon></check-box><text-field style="width:313px;margin:0 3px 0 6px;font-weight:600;font-size:12px">MazeGen</text-field><check-box></check-box><span style="margin:0 2px 0 4px">Static</span><ui-icon name="caret"></ui-icon></div>
<div class="r" style="padding-left:4px"><span style="width:26px">Tag</span><drop-field style="width:168px">Untagged</drop-field><span style="margin-left:13px;width:36px">Layer</span><drop-field style="width:158px">Default</drop-field></div></div></div>
<component-header><ui-icon slot="lead" name="fold"></ui-icon><ui-icon slot="lead" name="axes"></ui-icon>Transform</component-header>
<div class="props"><vector-row label="Position" values="1.635947 1.492308 1.023654"></vector-row><vector-row label="Rotation" values="0 0 0"></vector-row><vector-row label="Scale" values="1 1 1"></vector-row></div>
<component-header><ui-icon slot="lead" name="fold"></ui-icon><ui-icon slot="lead" name="script" style="margin-left:1px"></ui-icon><check-box slot="lead"><ui-icon name="check"></ui-icon></check-box>Maze Gen (Script)</component-header>
<div class="props" style="height:50px"><object-row dim label="Script"><ui-icon name="scriptDim"></ui-icon>MazeGen</object-row><object-row label="Cube"><ui-icon name="prefabS"></ui-icon>Cube</object-row></div>
<div style="height:1px;background:#1a1a1a;flex:none"></div><div class="add">Add Component</div>`);

define('status-bar',`:host{display:flex;justify-content:flex-end;height:24px;background:#191919;border-bottom:2px solid #191919;width:1902px;padding-right:1px;box-shadow:inset 0 -1px #3a3a3a}.c{width:26.300px;display:flex;align-items:center;justify-content:center;border-left:1px solid #242424;padding-top:1px}`,
`<div class="c"><ui-icon name="bug"></ui-icon></div><div class="c"><ui-icon name="stack"></ui-icon></div><div class="c"><ui-icon name="refresh"></ui-icon></div><div class="c"><ui-icon name="ok"></ui-icon></div>`);

/* ---------- freehand pen strokes laid over the editor ---------- */
const strokes=[
 [5.5,[133,112],[160,106],[200,95],[280,74],[355,56],[467,33],[583,18],[683,10],[760,6],[830,5],[900,7],[960,10],[1051,19],[1130,29],[1185,39],[1281,62],[1377,89],[1450,114],[1500,133],[1550,159],[1583,181],[1620,203],[1650,220],[1667,229],[1687,246]],
 [5.5,[1643,237],[1657,246],[1677,250.5],[1688,247],[1695,236],[1698,218]],
 [5,[117,110],[103,104],[80,104],[43,117],[18,135],[12,147],[16,157],[27,162],[60,162],[97,150],[112,133],[112,120],[104,110]],
 [5.5,[331,78],[337,101],[348,130]],[5.5,[336,84],[343,78],[355,77],[367,88],[373,107],[367,130],[356,142],[349,142],[346,138]],
 [5.5,[410,89],[404,93],[397,104],[395,114],[398,121]],[5.5,[428,99],[422,97],[416,102],[423,105],[440,105]],
 [5.5,[452,87],[462,107],[473,123],[476,133],[469,147],[462,150],[459,143],[466,131],[480,117]],
 [5,[328,618],[313,605],[293,597],[267,596],[217,612],[180,640],[166,673],[161,707],[165,740],[180,765],[205,780],[233,783],[283,773],[327,747],[350,720],[356,697],[350,675],[340,660],[333,649]],
 [2,[331,623],[325,615]],
 [5.5,[362,697],[380,699],[420,698],[487,692],[609,668],[731,636],[828,599],[903,564],[974,524],[1081.6,457],[1189,397],[1296,341],[1340,316],[1385,296],[1446,273]],
 [5.5,[1424,262],[1439,258],[1452,262],[1451,276],[1435,294],[1405,316.5]],
 [6,[862,638],[867,655],[873,680],[873,694],[867,702]],[6,[863,630],[875,627],[892,627],[905,634],[915.5,649],[917,665],[904,686],[885,698],[867,702]],
 [6,[946,653],[934,654],[931,660],[935,670],[940.5,678]],[6,[974.5,659],[972.6,653],[964,658],[962,664],[970,666],[978,666],[987,673],[996,672]],
 [6,[1018,656],[1015,651],[1003,660],[1007,670],[1026,690],[1034,710],[1028,725],[1017,731],[1011,725],[1016,707],[1026,690],[1045,667]]];
const curve=p=>{let d=`M${p[0]}`;for(let i=0;i<p.length-1;i++){const a=p[i-1]||p[i],b=p[i],c=p[i+1],e=p[i+2]||c;
 d+=`C${b[0]+(c[0]-a[0])/6} ${b[1]+(c[1]-a[1])/6} ${c[0]-(e[0]-b[0])/6} ${c[1]-(e[1]-b[1])/6} ${c}`}return d};
define('pen-overlay',':host{position:absolute;inset:0;pointer-events:none}svg{display:block}',
`<svg width="1910" height="984" fill="none" stroke="#26e600" stroke-linecap="round" stroke-linejoin="round">${strokes.map(([w,...p])=>`<path stroke-width="${w}" d="${curve(p)}"/>`).join('')}</svg>`);

define('editor-app',`:host{display:block;position:relative;width:1910px;height:984px;background:#191919;overflow:hidden}
.page{display:flex}.win{width:1902px}.cols{display:flex;gap:2px}.left{display:flex;flex-direction:column;gap:2px}.row{display:flex;gap:2px}
.edge{width:8px;border-left:1px solid #3a3a3a;height:984px;background:linear-gradient(#fff 0 2px,#191919 2px 44px,#2c2c2c 44px 75px,#3a3a3a 75px 76px,#242424 76px 222px,#999 222px 225px,#242424 225px 918px,#2e2e2e 918px 949px,#242424 949px 958px,#151515 958px)}`,
`<div class="page"><div class="win"><main-toolbar></main-toolbar><div class="cols"><div class="left"><div class="row"><hierarchy-panel></hierarchy-panel><scene-panel></scene-panel></div><project-panel></project-panel></div><inspector-panel></inspector-panel></div><status-bar></status-bar></div><div class="edge"></div></div><pen-overlay></pen-overlay>`);
</script></body></html>
